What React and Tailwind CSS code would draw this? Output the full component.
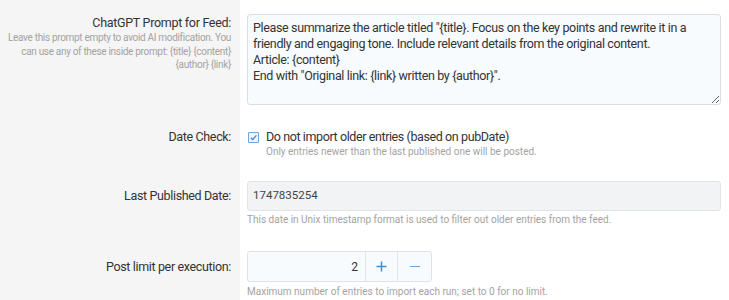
import React from "react";

const font = { fontFamily: 'Roboto, "Liberation Sans", Arial, sans-serif' };

function Row({ label, labelClass = "", children, cellClass = "" }) {
  return (
    <div className="flex">
      <div className={`w-[240px] shrink-0 bg-[#f5f5f5] pr-[9px] pl-[8px] text-right ${labelClass}`}>
        {label}
      </div>
      <div className={`flex-1 pl-[7px] pr-[8px] ${cellClass}`}>{children}</div>
    </div>
  );
}

export default function App() {
  const prompt =
    'Please summarize the article titled "{title}. Focus on the key points and rewrite it in a friendly and engaging tone. Include relevant details from the original content.\nArticle: {content}\nEnd with "Original link: {link} written by {author}".';
  return (
    <div className="w-[729px] h-[300px] overflow-hidden bg-white text-[#333]" style={font}>
      <Row
        labelClass="pt-[15px]"
        cellClass="pt-[14px] pb-[14px]"
        label={
          <>
            <div className="text-[12.5px] leading-[16px] tracking-[-0.3px] text-[#333]">ChatGPT Prompt for Feed:</div>
            <div className="text-[10px] leading-[13.5px] tracking-[-0.32px] text-[#a3a3a3] mt-[0px]">
              Leave this prompt empty to avoid AI modification. You can use any of these inside prompt: {"{title}"} {"{content}"} {"{author}"} {"{link}"}
            </div>
          </>
        }
      >
        <textarea
          readOnly
          defaultValue={prompt}
          className="block w-[474px] h-[91px] border border-[#dcdfe2] rounded-[3px] bg-[#f7fbfe] px-[5px] pt-[5px] text-[12.5px] leading-[16px] tracking-[-0.35px] text-[#333] outline-none resize-y"
          style={font}
        />
      </Row>
      <Row
        labelClass="pt-[9px] text-[12.5px] leading-[18px] tracking-[-0.35px]"
        cellClass="pt-[9px] pb-[9px]"
        label="Date Check:"
      >
        <div className="flex items-center h-[18px]">
          <span className="flex items-center justify-center w-[11px] h-[11px] border border-[#6aa6db] bg-[#eef5fc] rounded-[1px] ml-[1px] mr-[7px]">
            <svg width="9" height="9" viewBox="0 0 10 10">
              <path d="M2 5.2 L4.2 7.3 L8.2 2.6" fill="none" stroke="#3b86c9" strokeWidth="1.4" />
            </svg>
          </span>
          <span className="text-[12.5px] tracking-[-0.4px] text-[#333]">Do not import older entries (based on pubDate)</span>
        </div>
        <div className="pl-[19px] text-[10px] leading-[12px] text-[#a3a3a3]">
          Only entries newer than the last published one will be posted.
        </div>
      </Row>
      <Row
        labelClass="pt-[20px] text-[12.5px] leading-[18px] tracking-[-0.35px]"
        cellClass="pt-[14px] pb-[11px]"
        label="Last Published Date:"
      >
        <div className="w-[474px] h-[30px] border border-[#e1e4e6] rounded-[3px] bg-[#f1f3f4] flex items-center px-[5px] text-[11.5px] text-[#444]">
          1747835254
        </div>
        <div className="mt-[3px] text-[10px] leading-[12px] text-[#a3a3a3]">
          This date in Unix timestamp format is used to filter out older entries from the feed.
        </div>
      </Row>
      <Row
        labelClass="pt-[21px] text-[12.5px] leading-[18px] tracking-[-0.35px]"
        cellClass="pt-[14px] pb-[20px]"
        label="Post limit per execution:"
      >
        <div className="flex w-[185px] h-[31px] border border-[#dfe3e6] rounded-[3px] bg-[#f7fbfe] overflow-hidden">
          <div className="w-[117px] flex items-center justify-end pr-[7px] text-[12px] text-[#333]">2</div>
          <div className="w-[32px] flex items-center justify-center border-l border-[#e3e6e9]">
            <svg width="11" height="11" viewBox="0 0 11 11">
              <path d="M5.5 0.5 V10.5 M0.5 5.5 H10.5" stroke="#3d8fd6" strokeWidth="1.5" />
            </svg>
          </div>
          <div className="flex-1 flex items-center justify-center border-l border-[#e3e6e9]">
            <span className="block w-[10px] h-[1.5px] bg-[#6aa6db]" />
          </div>
        </div>
        <div className="mt-[4px] text-[10px] leading-[12px] text-[#a3a3a3]">
          Maximum number of entries to import each run; set to 0 for no limit.
        </div>
      </Row>
    </div>
  );
}
